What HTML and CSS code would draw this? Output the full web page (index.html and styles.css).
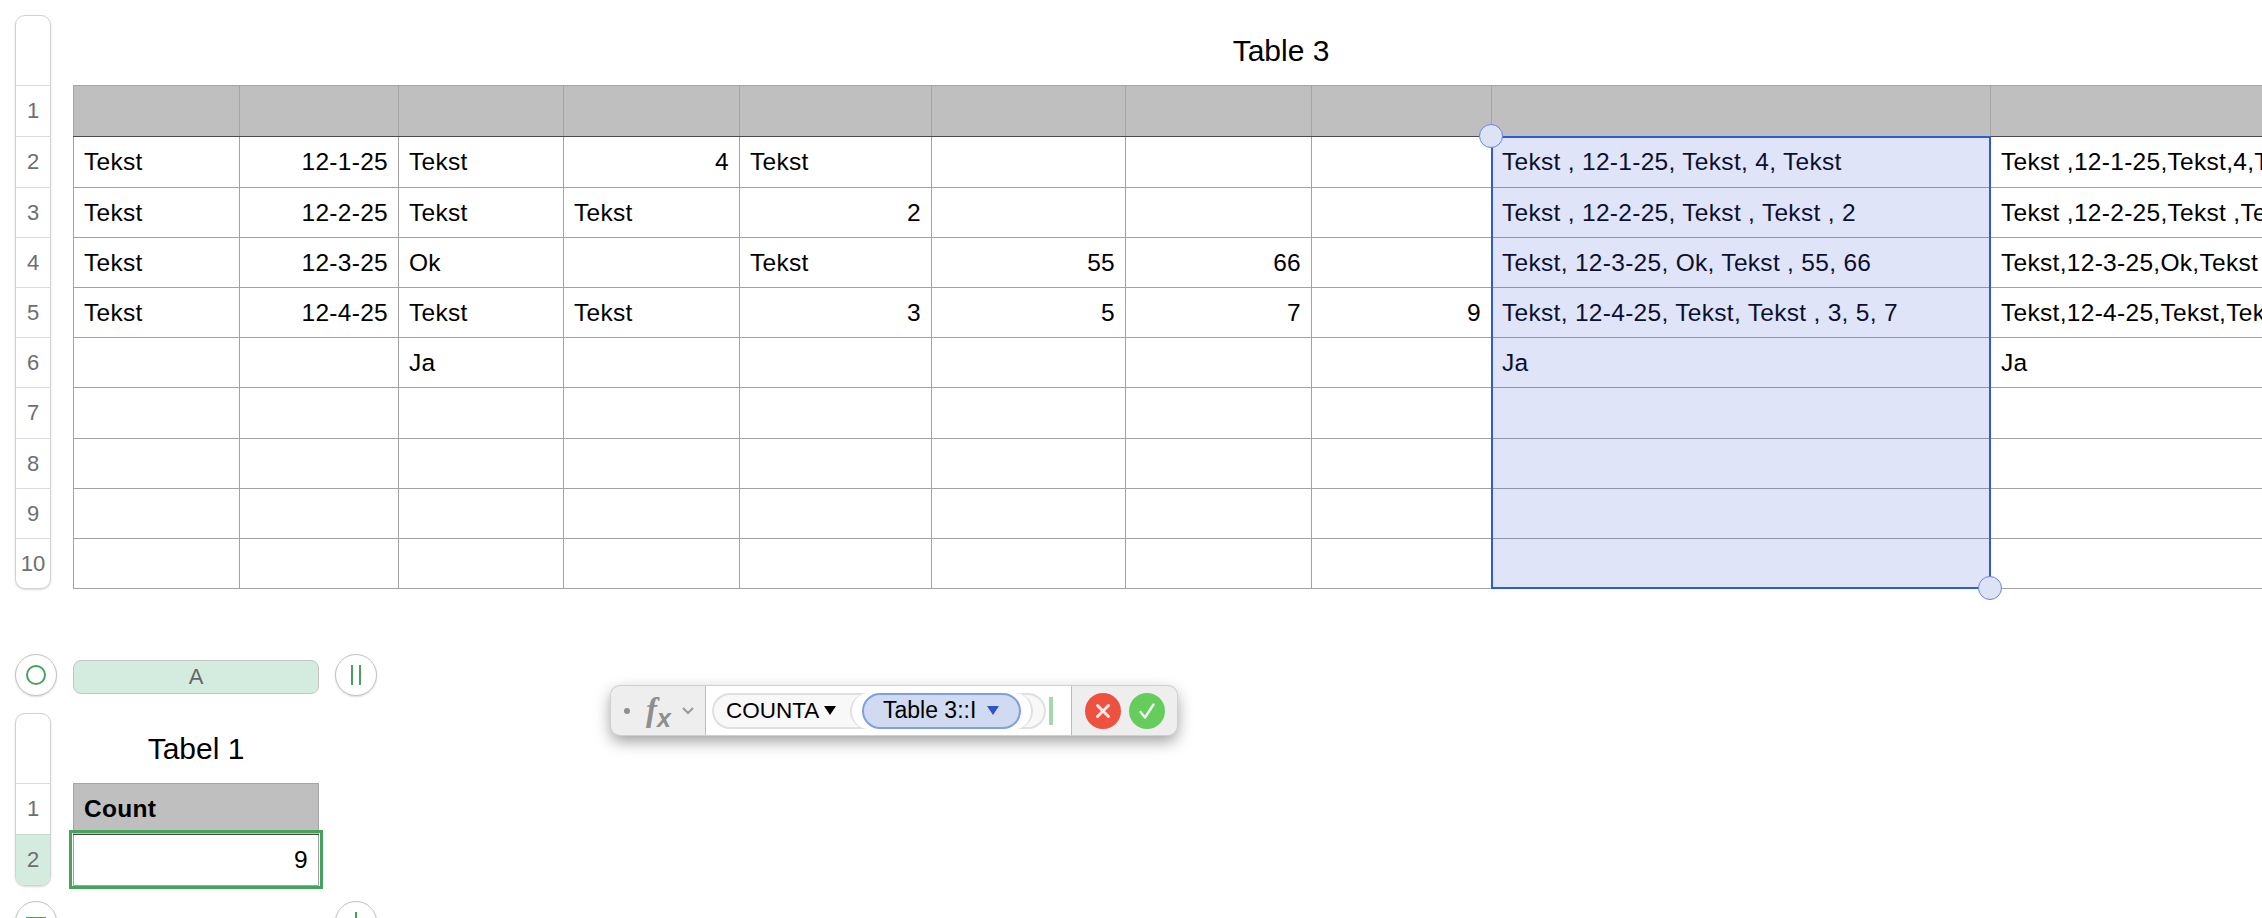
FILE: index.html
```html
<!DOCTYPE html>
<html lang="en">
<head>
<meta charset="UTF-8" />
<title>Table 3</title>
<link rel="stylesheet" href="styles.css">
</head>
<body>

<div class="block first">
  <div class="row-head">
    <div class="row-corner"></div>
    <div class="row-num tall">1</div>
    <div class="row-num tall">2</div>
    <div class="row-num">3</div>
    <div class="row-num">4</div>
    <div class="row-num">5</div>
    <div class="row-num">6</div>
    <div class="row-num tall">7</div>
    <div class="row-num">8</div>
    <div class="row-num">9</div>
    <div class="row-num">10</div>
  </div>
  <div class="sheet big">
    <div class="table-title">Table 3</div>
    <table>
      <colgroup>
        <col class="c1"><col class="c2"><col class="c3"><col class="c4"><col class="c5">
        <col class="c6"><col class="c7"><col class="c8"><col class="c9"><col class="c10">
      </colgroup>
      <tr class="head tall"><th></th><th></th><th></th><th></th><th></th><th></th><th></th><th></th><th></th><th></th></tr>
      <tr class="tall">
        <td>Tekst</td><td class="num">12-1-25</td><td>Tekst</td><td class="num">4</td><td>Tekst</td><td></td><td></td><td></td>
        <td class="picked">Tekst , 12-1-25, Tekst, 4, Tekst</td><td>Tekst ,12-1-25,Tekst,4,Tekst</td>
      </tr>
      <tr>
        <td>Tekst</td><td class="num">12-2-25</td><td>Tekst</td><td>Tekst</td><td class="num">2</td><td></td><td></td><td></td>
        <td class="picked">Tekst , 12-2-25, Tekst , Tekst , 2</td><td>Tekst ,12-2-25,Tekst ,Tekst ,2</td>
      </tr>
      <tr>
        <td>Tekst</td><td class="num">12-3-25</td><td>Ok</td><td></td><td>Tekst</td><td class="num">55</td><td class="num">66</td><td></td>
        <td class="picked">Tekst, 12-3-25, Ok, Tekst , 55, 66</td><td>Tekst,12-3-25,Ok,Tekst ,55,66</td>
      </tr>
      <tr>
        <td>Tekst</td><td class="num">12-4-25</td><td>Tekst</td><td>Tekst</td><td class="num">3</td><td class="num">5</td><td class="num">7</td><td class="num">9</td>
        <td class="picked">Tekst, 12-4-25, Tekst, Tekst , 3, 5, 7</td><td>Tekst,12-4-25,Tekst,Tekst ,3,5,7,9</td>
      </tr>
      <tr>
        <td></td><td></td><td>Ja</td><td></td><td></td><td></td><td></td><td></td>
        <td class="picked">Ja</td><td>Ja</td>
      </tr>
      <tr class="tall"><td></td><td></td><td></td><td></td><td></td><td></td><td></td><td></td><td class="picked"></td><td></td></tr>
      <tr><td></td><td></td><td></td><td></td><td></td><td></td><td></td><td></td><td class="picked"></td><td></td></tr>
      <tr><td></td><td></td><td></td><td></td><td></td><td></td><td></td><td></td><td class="picked"></td><td></td></tr>
      <tr><td></td><td></td><td></td><td></td><td></td><td></td><td></td><td></td><td class="picked"></td><td></td></tr>
    </table>
    <div class="pick-frame">
      <span class="handle top-left"></span>
      <span class="handle bottom-right"></span>
    </div>
  </div>
</div>

<div class="col-bar">
  <div class="round-btn"><span class="ring"></span></div>
  <div class="col-pill">A</div>
  <div class="round-btn"><span class="bars"></span></div>
</div>

<div class="block second">
  <div class="row-head">
    <div class="row-corner"></div>
    <div class="row-num tall">1</div>
    <div class="row-num tall active">2</div>
  </div>
  <div class="sheet small">
    <div class="table-title">Tabel 1</div>
    <table>
      <tr class="head tall"><th>Count</th></tr>
      <tr class="tall"><td class="num">9</td></tr>
    </table>
    <div class="cell-frame"></div>
  </div>
</div>

<div class="col-bar bottom">
  <div class="round-btn"><span class="lines"></span></div>
  <div class="col-gap"></div>
  <div class="round-btn"><span class="plus"></span></div>
</div>

<div class="formula-bar">
  <div class="fx-side">
    <span class="dot"></span>
    <span class="fx">f<sub>x</sub></span>
    <svg class="chev" width="12" height="8" viewBox="0 0 12 8"><path d="M1 1l5 5 5-5" fill="none" stroke="#9a9a9a" stroke-width="2"/></svg>
  </div>
  <div class="fx-input">
    <div class="fn-pill">
      <span class="fn-name">COUNTA</span>
      <svg class="tri" width="12" height="9" viewBox="0 0 12 9"><path d="M0 0h12L6 9z" fill="#000"/></svg>
      <div class="arg-slot">
        <div class="arg-pill">
          <span>Table 3::I</span>
          <svg width="12" height="9" viewBox="0 0 12 9"><path d="M0 0h12L6 9z" fill="#2c55c8"/></svg>
        </div>
      </div>
    </div>
    <span class="caret"></span>
  </div>
  <div class="fx-actions">
    <div class="act cancel">
      <svg width="16" height="16" viewBox="0 0 16 16"><path d="M2.5 2.5l11 11M13.500 2.500l-11 11" stroke="#fbe9e6" stroke-width="3" stroke-linecap="round"/></svg>
    </div>
    <div class="act ok">
      <svg width="20" height="20" viewBox="0 0 20 20"><path d="M3.500 11l4.500 5.500L16.500 3.500" fill="none" stroke="#f1faef" stroke-width="2.400" stroke-linecap="round" stroke-linejoin="round"/></svg>
    </div>
  </div>
</div>

</body>
</html>
```

FILE: styles.css
```css
html, body {
  margin: 0;
  height: 918px;
  overflow: hidden;
}

body {
  position: relative;
  width: 2262px;
  background: #fff;
  font-family: 'Liberation Sans', Arial, sans-serif;
  color: #000;
}

.block {
  display: flex;
  gap: 22px;
  padding-left: 15px;
}

.block.first {
  padding-top: 15px;
}

.block.second {
  margin-top: 17px;
}

/* row numbers down the left */
.row-head {
  width: 36px;
  flex: none;
  box-sizing: border-box;
  border: 1px solid #d2d2d2;
  border-radius: 10px;
  box-shadow: 0 1px 2px rgba(0, 0, 0, 0.15);
  overflow: hidden;
  background: #fff;
}

.row-corner {
  height: 69px;
}

.row-num {
  height: 50px;
  box-sizing: border-box;
  border-top: 1px solid #dcdcdc;
  display: flex;
  align-items: center;
  justify-content: center;
  font-size: 22px;
  color: #6e6e73;
}

.row-num.tall {
  height: 51px;
}

.row-num.active {
  background: #d4ecdf;
  border-top-color: #c4dccf;
}

/* tables */
.sheet {
  position: relative;
  flex: none;
}

.sheet.big {
  width: 2416px;
}

.sheet.small {
  width: 246px;
}

.table-title {
  height: 70px;
  box-sizing: border-box;
  padding-top: 2px;
  display: flex;
  align-items: center;
  justify-content: center;
  font-size: 30px;
}

table {
  border-collapse: collapse;
  table-layout: fixed;
  width: 100%;
}

.c1 { width: 166px; }
.c2 { width: 159px; }
.c3 { width: 165px; }
.c4 { width: 176px; }
.c5 { width: 192px; }
.c6 { width: 194px; }
.c7 { width: 186px; }
.c8 { width: 180px; }
.c9 { width: 499px; }
.c10 { width: 499px; }

tr {
  height: 50px;
}

tr.tall {
  height: 51px;
}

th, td {
  border: 1px solid #a3a3a3;
  padding: 0 10px;
  font-size: 24.5px;
  letter-spacing: 0.3px;
  font-weight: 400;
  text-align: left;
  white-space: nowrap;
  overflow: hidden;
}

th {
  background: #bebfbe;
  border-color: #a4a6a4;
  border-bottom-color: #4a4a4a;
  font-weight: 700;
}

td.num {
  text-align: right;
}

td.picked {
  background: #dfe4f8;
  color: #0b1030;
  border-top-color: #8f96b0;
  border-bottom-color: #8f96b0;
}

.pick-frame {
  position: absolute;
  left: 1418px;
  top: 121px;
  width: 500px;
  height: 453px;
  box-sizing: border-box;
  border: 2px solid #2f5bd6;
}

.handle {
  position: absolute;
  width: 24px;
  height: 24px;
  box-sizing: border-box;
  border: 1px solid #6d7ff0;
  border-radius: 50%;
  background: #dbe3f5;
}

.handle.top-left {
  left: -14px;
  top: -14px;
}

.handle.bottom-right {
  right: -13px;
  bottom: -13px;
}

.cell-frame {
  position: absolute;
  left: -4px;
  top: 117px;
  right: -4px;
  height: 59px;
  box-sizing: border-box;
  border: 3px solid #46a35c;
}

/* column bar with the round buttons */
.col-bar {
  display: flex;
  align-items: center;
  gap: 16px;
  padding-left: 15px;
  margin-top: 65px;
}

.col-bar.bottom {
  margin-top: 15px;
}

.round-btn {
  width: 42px;
  height: 42px;
  box-sizing: border-box;
  flex: none;
  border: 1px solid #c4c4c4;
  border-radius: 50%;
  box-shadow: 0 1px 2px rgba(0, 0, 0, 0.15);
  background: #fff;
  display: flex;
  align-items: center;
  justify-content: center;
}

.ring {
  width: 20px;
  height: 20px;
  box-sizing: border-box;
  border: 2px solid #46a35c;
  border-radius: 50%;
}

.bars {
  width: 10px;
  height: 20px;
  box-sizing: border-box;
  border-left: 2px solid #46a35c;
  border-right: 2px solid #46a35c;
}

.lines {
  width: 20px;
  height: 10px;
  box-sizing: border-box;
  border-top: 2px solid #46a35c;
  border-bottom: 2px solid #46a35c;
}

.plus {
  width: 2px;
  height: 20px;
  background: #46a35c;
}

.col-pill {
  width: 246px;
  height: 34px;
  margin-top: 4px;
  box-sizing: border-box;
  border: 1px solid #c4c4c4;
  border-radius: 8px;
  background: #d4ecdf;
  color: #66666a;
  font-size: 22px;
  display: flex;
  align-items: center;
  justify-content: center;
}

.col-gap {
  width: 246px;
}

/* floating formula editor */
.formula-bar {
  position: absolute;
  left: 611px;
  top: 686px;
  width: 566px;
  height: 49px;
  box-sizing: border-box;
  display: flex;
  border-radius: 9px;
  background: #eeeeee;
  box-shadow: 0 0 0 1px #d0d0d0, 0 6px 16px rgba(0, 0, 0, 0.4);
  overflow: visible;
}

.fx-side {
  width: 95px;
  flex: none;
  box-sizing: border-box;
  padding-left: 13px;
  display: flex;
  align-items: center;
  border-right: 1px solid #bdbdbd;
}

.dot {
  width: 6px;
  height: 6px;
  border-radius: 50%;
  background: #8e8e8e;
}

.fx {
  margin-left: 16px;
  font-family: 'Liberation Serif', serif;
  font-style: italic;
  font-weight: 700;
  font-size: 33px;
  line-height: 1;
  color: #8e8e8e;
}

.fx sub {
  font-family: 'Liberation Sans', sans-serif;
  font-size: 25px;
  line-height: 0;
  vertical-align: -6px;
}

.chev {
  margin-left: 11px;
}

.fx-input {
  width: 366px;
  flex: none;
  box-sizing: border-box;
  background: #fff;
  padding-left: 6px;
  display: flex;
  align-items: center;
  border-right: 1px solid #bdbdbd;
}

.fn-pill {
  width: 334px;
  height: 36px;
  flex: none;
  box-sizing: border-box;
  border: 2px solid #e0e0e0;
  border-radius: 18px;
  background: #f8f8f8;
  padding-left: 12px;
  display: flex;
  align-items: center;
}

.fn-name {
  font-size: 22.5px;
}

.tri {
  margin-left: 5px;
}

.arg-slot {
  width: 183px;
  height: 36px;
  margin-left: auto;
  margin-right: 11px;
  flex: none;
  box-sizing: border-box;
  border-left: 2px solid #e0e0e0;
  border-right: 2px solid #e0e0e0;
  border-radius: 18px;
  background: #fff;
  display: flex;
  align-items: center;
  justify-content: center;
}

.arg-pill {
  width: 159px;
  height: 36px;
  flex: none;
  box-sizing: border-box;
  border: 2px solid #7f9fe3;
  border-radius: 18px;
  background: #d0dbf2;
  padding-left: 19px;
  display: flex;
  align-items: center;
  gap: 11px;
  font-size: 23px;
}

.caret {
  width: 4px;
  height: 28px;
  margin-left: 3px;
  background: #a5d8aa;
}

.fx-actions {
  flex: 1;
  display: flex;
  align-items: center;
  gap: 8px;
  padding-left: 13px;
}

.act {
  width: 36px;
  height: 36px;
  border-radius: 50%;
  display: flex;
  align-items: center;
  justify-content: center;
}

.act.cancel {
  background: #ee5140;
}

.act.ok {
  background: #66cc5c;
}
```
